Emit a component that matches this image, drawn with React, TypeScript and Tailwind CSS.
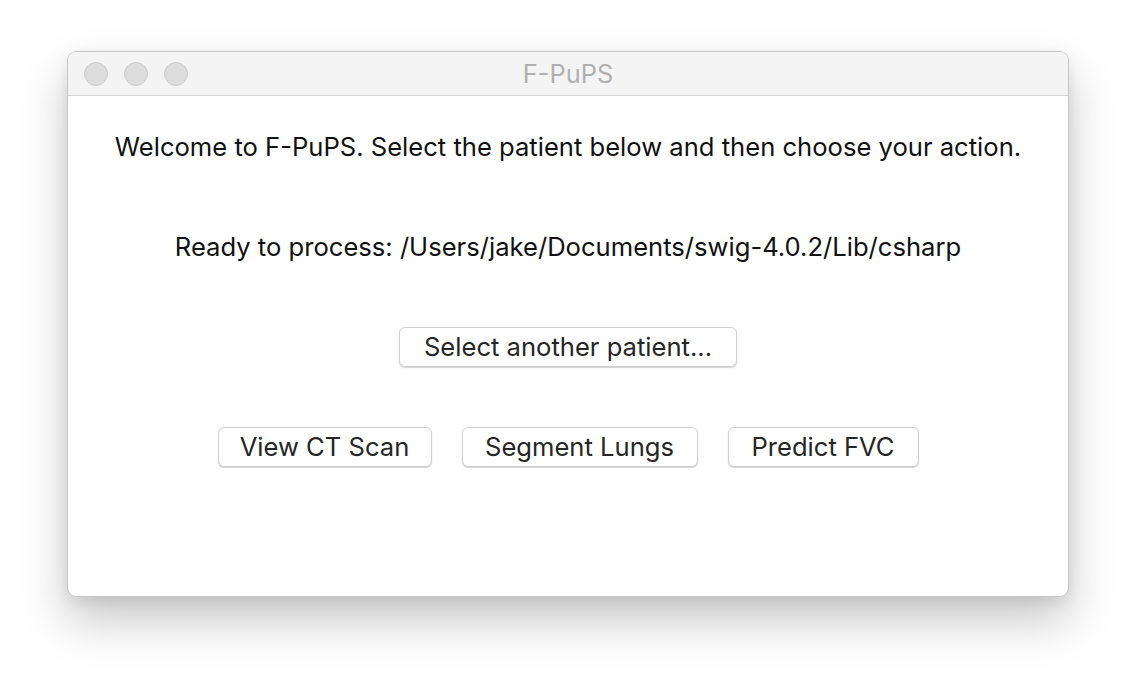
import React from 'react';

const font = { fontFamily: 'Inter, "Noto Sans", "Liberation Sans", sans-serif' };

const MacButton: React.FC<{ label: string; width: string }> = ({ label, width }) => (
  <button
    className={`h-[40px] ${width} rounded-[6px] border border-[#cfcfcf] bg-white text-[25.6px] text-[#262626] shadow-[0_1px_1px_rgba(0,0,0,0.18)] flex items-center justify-center`}
  >
    {label}
  </button>
);

export default function App() {
  return (
    <div className="w-[1136px] h-[680px] bg-white overflow-hidden pt-[51px] pl-[67px]" style={font}>
      <div className="w-[1002px] h-[546px] rounded-[9px] border border-[#c6c6c6] bg-white overflow-hidden shadow-[0_24px_48px_rgba(0,0,0,0.22),0_4px_14px_rgba(0,0,0,0.08)] flex flex-col">
        {/* Title bar */}
        <div className="relative h-[44px] shrink-0 bg-[#f4f4f4] border-b border-[#d4d4d4] flex items-center justify-center">
          <div className="absolute left-[16px] top-[10px] flex gap-[16px]">
            <span className="w-[24px] h-[24px] rounded-full bg-[#dcdcdc] border border-[#cdcdcd]" />
            <span className="w-[24px] h-[24px] rounded-full bg-[#dcdcdc] border border-[#cdcdcd]" />
            <span className="w-[24px] h-[24px] rounded-full bg-[#dcdcdc] border border-[#cdcdcd]" />
          </div>
          <span className="text-[25.4px] leading-[30px] text-[#b0b0b0]">F-PuPS</span>
        </div>

        {/* Content */}
        <div className="flex flex-col items-center text-[25.6px] text-[#111]">
          <p className="mt-[36px] leading-[30px]">
            Welcome to F-PuPS. Select the patient below and then choose your action.
          </p>
          <p className="mt-[70px] leading-[30px]">
            Ready to process: /Users/jake/Documents/swig-4.0.2/Lib/csharp
          </p>
          <div className="mt-[65px]">
            <MacButton label="Select another patient..." width="w-[338px]" />
          </div>
          <div className="mt-[60px] flex gap-[30px]">
            <MacButton label="View CT Scan" width="w-[214px]" />
            <MacButton label="Segment Lungs" width="w-[236px]" />
            <MacButton label="Predict FVC" width="w-[191px]" />
          </div>
        </div>
      </div>
    </div>
  );
}
